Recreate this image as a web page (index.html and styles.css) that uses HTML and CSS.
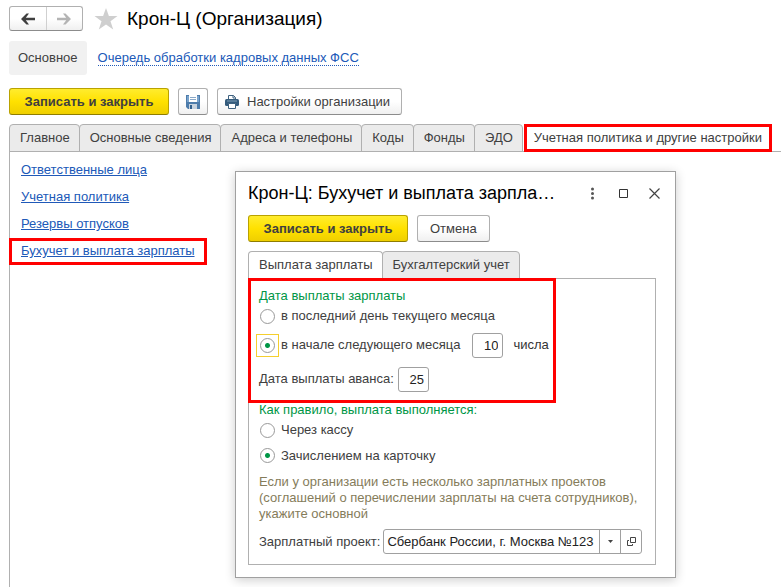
FILE: index.html
```html
<!DOCTYPE html>
<html lang="ru">
<head>
<meta charset="utf-8">
<title>Крон-Ц (Организация)</title>
<link rel="stylesheet" href="styles.css">
</head>
<body>
<div class="app">
  <header class="titlebar">
    <div class="history">
      <button type="button" class="history-btn" aria-label="Назад"><svg width="14" height="12" viewBox="0 0 14 12"><path d="M0 6 5.500.5H8L4.800 4.700H14v2.600H4.800L8 11.500H5.500z" fill="#404040"/></svg></button>
      <button type="button" class="history-btn" aria-label="Вперед"><svg width="14" height="12" viewBox="0 0 14 12"><path d="M14 6 8.500.5H6l3.200 4.200H0v2.600h9.200L6 11.500h2.500z" fill="#b4b4b4"/></svg></button>
    </div>
    <svg class="star" width="24" height="22" viewBox="0 0 24 22"><path d="M12 0l2.900 8H23.500l-7 5.200 2.700 8.300L12 16.400l-7.200 5.100 2.700-8.300-7-5.200h8.600z" fill="#cfcfcf"/></svg>
    <h1 class="title">Крон-Ц (Организация)</h1>
  </header>

  <nav class="sections">
    <a href="#main" class="section-current">Основное</a>
    <a href="#queue" class="section-link">Очередь обработки кадровых данных ФСС</a>
  </nav>

  <div class="toolbar">
    <button type="button" class="btn btn-primary">Записать и закрыть</button>
    <button type="button" class="btn btn-icon" aria-label="Записать"><svg width="14" height="14" viewBox="0 0 14 14"><path d="M0 0h14v14H2l-2-2z" fill="#4d7cab"/><path d="M1 1h2v6H1zM11 1h2v6h-2z" fill="#79a3cc"/><path d="M3 0h8v7H3z" fill="#fff"/><path d="M4 2.500h6M4 4.500h6" stroke="#8aa9c8"/><path d="M3 9h8v5H3z" fill="#c6d2de"/><path d="M4 10h2v4H4z" fill="#315f8d"/></svg></button>
    <button type="button" class="btn btn-print"><svg width="14" height="14" viewBox="0 0 14 14"><path d="M3.500 4V.5h5l2 2V4" fill="#fff" stroke="#3f6280"/><path d="M8 .5V3h2.500" fill="none" stroke="#3f6280"/><rect y="4" width="14" height="7" rx="1.500" fill="#355c7d"/><path d="M2 6h10" stroke="#7f9db7"/><path d="M3.500 8.500h7v5h-7z" fill="#fff" stroke="#3f6280"/></svg>Настройки организации</button>
  </div>

  <div class="tabs" role="tablist">
    <button type="button" role="tab" class="tab">Главное</button>
    <button type="button" role="tab" class="tab">Основные сведения</button>
    <button type="button" role="tab" class="tab">Адреса и телефоны</button>
    <button type="button" role="tab" class="tab">Коды</button>
    <button type="button" role="tab" class="tab">Фонды</button>
    <button type="button" role="tab" class="tab">ЭДО</button>
    <button type="button" role="tab" class="tab tab-marked" aria-selected="true">Учетная политика и другие настройки</button>
  </div>

  <main class="page">
    <a href="#persons" class="page-link">Ответственные лица</a>
    <a href="#policy" class="page-link">Учетная политика</a>
    <a href="#reserves" class="page-link">Резервы отпусков</a>
    <a href="#salary" class="page-link page-link-marked">Бухучет и выплата зарплаты</a>
  </main>
</div>

<section class="dialog" role="dialog" aria-labelledby="dialog-title">
  <header class="dialog-head">
    <h2 class="title dialog-title" id="dialog-title">Крон-Ц: Бухучет и выплата зарпла…</h2>
    <div class="window-tools">
      <button type="button" class="tool" aria-label="Еще"><svg width="13" height="13" viewBox="0 0 13 13"><circle cx="6.500" cy="2" r="1.500" fill="#555"/><circle cx="6.500" cy="6.500" r="1.500" fill="#555"/><circle cx="6.500" cy="11" r="1.500" fill="#555"/></svg></button>
      <button type="button" class="tool" aria-label="Развернуть"><svg width="13" height="13" viewBox="0 0 13 13"><path d="M2.500 2.500h8v8h-8z" fill="none" stroke="#333"/></svg></button>
      <button type="button" class="tool" aria-label="Закрыть"><svg width="13" height="13" viewBox="0 0 13 13"><path d="M1.500 1.500l10 10M11.500 1.500l-10 10" fill="none" stroke="#444" stroke-width="1.200"/></svg></button>
    </div>
  </header>
  <div class="dialog-buttons">
    <button type="button" class="btn btn-primary">Записать и закрыть</button>
    <button type="button" class="btn">Отмена</button>
  </div>
  <div class="tabs" role="tablist">
    <button type="button" role="tab" class="tab tab-active" aria-selected="true">Выплата зарплаты</button>
    <button type="button" role="tab" class="tab">Бухгалтерский учет</button>
  </div>
  <form class="panel">
    <div class="dates" role="group" aria-labelledby="dates-title">
      <h3 class="group-title" id="dates-title">Дата выплаты зарплаты</h3>
      <div class="row"><label class="choice"><input type="radio" name="day" class="radio">в последний день текущего месяца</label></div>
      <div class="row row-tall">
        <label class="choice"><span class="focus-frame"><input type="radio" name="day" class="radio" checked></span>в начале следующего месяца</label>
        <input type="text" class="num" id="day" value="10">
        <label for="day" class="unit">числа</label>
      </div>
      <div class="row row-tall">
        <label for="advance">Дата выплаты аванса:</label>
        <input type="text" class="num num-near" id="advance" value="25">
      </div>
    </div>
    <div class="method" role="group" aria-labelledby="method-title">
      <h3 class="group-title" id="method-title">Как правило, выплата выполняется:</h3>
      <div class="row"><label class="choice"><input type="radio" name="method" class="radio">Через кассу</label></div>
      <div class="row row-card"><label class="choice"><input type="radio" name="method" class="radio" checked>Зачислением на карточку</label></div>
      <p class="hint">Если у организации есть несколько зарплатных проектов (соглашений о перечислении зарплаты на счета сотрудников), укажите основной</p>
      <div class="project">
        <label for="project">Зарплатный проект:</label>
        <div class="combo">
          <input type="text" id="project" class="combo-input" value="Сбербанк России, г. Москва №123">
          <button type="button" class="combo-btn" aria-label="Выбрать"><svg width="5" height="3" viewBox="0 0 5 3"><path d="M0 0h5L2.500 3z" fill="#444"/></svg></button>
          <button type="button" class="combo-btn" aria-label="Открыть"><svg width="9" height="9" viewBox="0 0 9 9"><path d="M3.500.5h5v5h-5zM2 3.500H.5v5h5V7" fill="none" stroke="#444"/></svg></button>
        </div>
      </div>
    </div>
  </form>
</section>
</body>
</html>
```
FILE: styles.css
```css
* { box-sizing: border-box; }
body {
  margin: 0;
  background: #fff;
  color: #404040;
  font: 13px/16px "Liberation Sans", Arial, sans-serif;
}
button, input { font: inherit; color: inherit; margin: 0; }
button { cursor: pointer; }
h1, h2, h3, p { margin: 0; font-weight: normal; }
svg { display: block; flex: none; }

.app {
  display: flex;
  flex-direction: column;
  min-height: 100vh;
  padding: 6px 0 0 9px;
}
.title { color: #000; font-size: 19px; line-height: 24px; white-space: nowrap; }
.dialog-title { font-size: 18px; }

.titlebar { display: flex; align-items: center; height: 25px; }
.history {
  display: flex;
  width: 74px;
  height: 25px;
  border: 1px solid #b0b0b0;
  border-bottom-color: #8c8c8c;
  border-radius: 3px;
  background: linear-gradient(#fff 50%, #f0f0f0);
}
.history-btn {
  flex: 1;
  display: flex;
  align-items: center;
  justify-content: center;
  padding: 0;
  border: 0;
  background: none;
}
.history-btn + .history-btn { border-left: 1px solid #d0d0d0; }
.star { margin: 0 9px 0 11px; }

.sections { display: flex; align-items: center; gap: 11px; margin-top: 10px; }
.section-current {
  padding: 9px;
  border-radius: 3px;
  background: #f1f1f1;
  color: #404040;
  text-decoration: none;
}
.section-link { color: #2059b8; text-decoration: none; border-bottom: 1px dotted #2059b8; line-height: 14px; }

.toolbar, .dialog-buttons { display: flex; gap: 9px; }
.toolbar { margin-top: 13px; }
.btn {
  display: flex;
  align-items: center;
  justify-content: center;
  gap: 8px;
  height: 27px;
  padding: 0 12px;
  border: 1px solid #b0b0b0;
  border-bottom-color: #8c8c8c;
  border-radius: 3px;
  background: linear-gradient(#fff 50%, #f0f0f0);
  white-space: nowrap;
}
.btn-primary {
  width: 160px;
  border-color: #b9a200;
  border-bottom-color: #8f7d00;
  background: linear-gradient(#ffec2e, #ffe100 50%, #efcf00);
  font-weight: bold;
}
.btn-icon { width: 30px; padding: 0; }
.btn-print { padding: 0 11px 0 7px; }

.tabs { display: flex; margin-top: 9px; }
.tab {
  height: 28px;
  margin-left: -1px;
  padding: 0 9px 0 10px;
  border: 1px solid #b0b0b0;
  border-radius: 4px 4px 0 0;
  background: #ebebeb;
  white-space: nowrap;
}
.tab:first-child { margin-left: 0; }
.tab-active, .tab-marked { position: relative; background: #fff; }
.tab-active { border-bottom-color: #fff; }
.tab-marked { margin-left: 1px; padding: 0 7px; border: 3px solid #f00; border-radius: 0; }

.page {
  flex: 1;
  display: flex;
  flex-direction: column;
  align-items: flex-start;
  gap: 11px;
  margin-top: -1px;
  padding: 10px 0 0 11px;
  border: 1px solid #b0b0b0;
  border-width: 1px 0 0 1px;
}
.page-link { color: #2059b8; }
.page-link-marked { margin: -5px 0 0 -12px; padding: 2px 9px 3px; border: 3px solid #f00; }

.dialog {
  position: absolute;
  left: 235px;
  top: 171px;
  width: 441px;
  padding: 8px 19px 12px 12px;
  border: 1px solid #a0a0a0;
  background: #fff;
  box-shadow: 0 2px 10px rgba(0, 0, 0, .2);
}
.dialog-head { display: flex; align-items: center; justify-content: space-between; height: 26px; }
.window-tools { display: flex; gap: 18px; margin-right: -5px; }
.tool { padding: 0; border: 0; background: none; }
.dialog-buttons { margin-top: 9px; }

.panel {
  margin-top: -1px;
  border: 1px solid #b0b0b0;
}
.dates {
  position: relative;
  width: 308px;
  margin: -1px 0 0 -1px;
  padding: 7px 8px 4px;
  border: 3px solid #f00;
}
.method { margin-top: -1px; padding: 0 10px 10px; }
.group-title { color: #009646; font-size: 13px; line-height: 16px; }
.row { display: flex; align-items: center; height: 24px; white-space: nowrap; }
.row-tall { height: 34px; }
.row-card { height: 27px; }
.choice { display: flex; align-items: center; gap: 5px; }
.radio {
  appearance: none;
  width: 15px;
  height: 15px;
  margin: 0 1px;
  border: 1px solid #999;
  border-radius: 50%;
  background: #fff;
}
.radio:checked { background: radial-gradient(circle, #009646 2px, #fff 3px); }
.focus-frame {
  display: flex;
  margin: 0 -3px;
  padding: 3px 2px;
  border: 1px solid #f5cf2e;
}
.num {
  width: 31px;
  height: 25px;
  margin-left: 12px;
  padding: 0 4px;
  border: 1px solid #a0a0a0;
  border-radius: 3px;
  background: #fff;
  color: #222;
  text-align: right;
}
.num-near { margin-left: 4px; }
.unit { margin-left: 10px; color: #333; }
.hint { margin-top: 5px; color: #857c5a; }
.project { display: flex; align-items: center; gap: 3px; margin-top: 7px; white-space: nowrap; }
.combo {
  display: flex;
  flex: 1;
  min-width: 0;
  height: 25px;
  margin-right: 3px;
  border: 1px solid #a0a0a0;
  border-radius: 3px;
}
.combo-input { flex: 1; min-width: 0; padding: 0 3px; border: 0; background: none; color: #222; }
.combo-btn {
  width: 21px;
  display: flex;
  align-items: center;
  justify-content: center;
  padding: 0;
  border: 0;
  border-left: 1px solid #a0a0a0;
  background: none;
}
```
